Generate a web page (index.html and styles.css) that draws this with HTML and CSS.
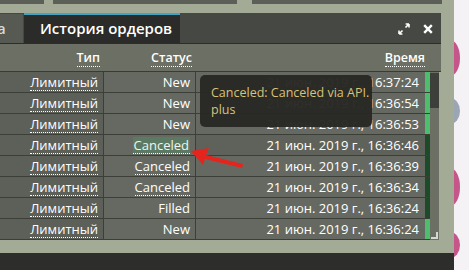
FILE: index.html
```html
<!DOCTYPE html>
<html lang="ru">
<head>
    <meta charset="UTF-8">
    <title>История ордеров</title>
    <link rel="stylesheet" href="styles.css">
</head>
<body>
    <div class="screen">
        <div class="workspace">
            <div class="top-strip">
                <div class="strip-seg seg-a"></div>
                <div class="strip-seg seg-b"></div>
                <div class="strip-seg seg-c"></div>
            </div>

            <div class="panel">
                <div class="panel-header">
                    <div class="tab">а</div>
                    <div class="tab active">История ордеров</div>
                    <div class="header-tools">
                        <svg class="tool-icon" width="12" height="12" viewBox="0 0 12 12">
                            <path d="M1 11 L4.5 7.5 M1 11 L1 7.6 M1 11 L4.4 11" stroke="#fff" stroke-width="1.6" fill="none"/>
                            <path d="M11 1 L7.5 4.5 M11 1 L7.6 1 M11 1 L11 4.4" stroke="#fff" stroke-width="1.6" fill="none"/>
                        </svg>
                        <svg class="tool-icon" width="10" height="10" viewBox="0 0 10 10">
                            <path d="M1.2 1.2 L8.8 8.8 M8.8 1.2 L1.2 8.8" stroke="#fff" stroke-width="2.4" fill="none"/>
                        </svg>
                    </div>
                </div>

                <div class="col-head">
                    <div class="th"><span class="dotted">Тип</span></div>
                    <div class="th"><span class="dotted">Статус</span></div>
                    <div class="th"><span class="dotted">Время</span></div>
                    <div class="th"></div>
                </div>

                <div class="panel-body">
                    <div class="rows">
                        <div class="row">
                            <div class="cell type"><span class="dotted">Лимитный</span></div>
                            <div class="cell">New</div>
                            <div class="cell">21 июн. 2019 г., 16:37:24</div>
                            <div class="mark on"></div>
                        </div>
                        <div class="row">
                            <div class="cell type"><span class="dotted">Лимитный</span></div>
                            <div class="cell">New</div>
                            <div class="cell">21 июн. 2019 г., 16:36:54</div>
                            <div class="mark on"></div>
                        </div>
                        <div class="row">
                            <div class="cell type"><span class="dotted">Лимитный</span></div>
                            <div class="cell">New</div>
                            <div class="cell">21 июн. 2019 г., 16:36:53</div>
                            <div class="mark on"></div>
                        </div>
                        <div class="row hover">
                            <div class="cell type"><span class="dotted">Лимитный</span></div>
                            <div class="cell"><span class="dotted status-hover">Canceled</span></div>
                            <div class="cell">21 июн. 2019 г., 16:36:46</div>
                            <div class="mark"></div>
                        </div>
                        <div class="row">
                            <div class="cell type"><span class="dotted">Лимитный</span></div>
                            <div class="cell"><span class="dotted">Canceled</span></div>
                            <div class="cell">21 июн. 2019 г., 16:36:39</div>
                            <div class="mark"></div>
                        </div>
                        <div class="row">
                            <div class="cell type"><span class="dotted">Лимитный</span></div>
                            <div class="cell"><span class="dotted">Canceled</span></div>
                            <div class="cell">21 июн. 2019 г., 16:36:34</div>
                            <div class="mark"></div>
                        </div>
                        <div class="row">
                            <div class="cell type"><span class="dotted">Лимитный</span></div>
                            <div class="cell">Filled</div>
                            <div class="cell">21 июн. 2019 г., 16:36:24</div>
                            <div class="mark"></div>
                        </div>
                        <div class="row">
                            <div class="cell type"><span class="dotted">Лимитный</span></div>
                            <div class="cell">New</div>
                            <div class="cell">21 июн. 2019 г., 16:36:24</div>
                            <div class="mark on"></div>
                        </div>
                    </div>
                    <div class="scrollbar">
                        <div class="thumb"></div>
                        <div class="resize-corner"></div>
                    </div>
                </div>
            </div>

            <div class="bottom-bar"></div>
        </div>

        <div class="side">
            <div class="blob blob-1"></div>
            <div class="blob blob-2"></div>
            <div class="blob blob-3"></div>
            <div class="blob blob-4"></div>
        </div>

        <div class="tooltip">Canceled: Canceled via API.<br>plus</div>

        <svg class="arrow" width="60" height="24" viewBox="0 0 60 24">
            <polygon points="2,4 20,1 17,8 54,17 53,21 16,12 14,18" fill="#e5241d"/>
        </svg>
    </div>
</body>
</html>
```

FILE: styles.css
```css
* {
    margin: 0;
    padding: 0;
    box-sizing: border-box;
}

body {
    font-family: 'Open Sans', 'DejaVu Sans', sans-serif;
    background: #a3ab96;
    width: 469px;
    height: 270px;
    overflow: hidden;
}

.screen {
    position: relative;
    display: flex;
    height: 270px;
}

.workspace {
    width: 454px;
    display: flex;
    flex-direction: column;
}

.top-strip {
    display: flex;
    height: 4px;
    margin-bottom: 9px;
    width: 442px;
}

.strip-seg {
    background: #5c5f58;
    height: 4px;
}

.seg-a {
    width: 44px;
    margin-right: 9px;
}

.seg-b {
    width: 184px;
    margin-right: 15px;
}

.seg-c {
    flex: 1;
}

.panel {
    width: 441px;
    display: flex;
    flex-direction: column;
}

.panel-header {
    display: flex;
    height: 31px;
    background: #464843;
    border-bottom: 1px solid #2c2d29;
}

.tab {
    width: 23px;
    margin-top: 1px;
    margin-right: 1px;
    background: #575a53;
    color: #d8d8d4;
    font-size: 15px;
    font-weight: 600;
    line-height: 29px;
    text-indent: -3px;
    overflow: hidden;
}

.tab.active {
    width: 156px;
    margin-top: 0;
    background: #2b2b29;
    border-top: 2px solid #43a3c3;
    color: #fff;
    text-indent: 0;
    padding-left: 16px;
    line-height: 27px;
}

.header-tools {
    flex: 1;
    display: flex;
    justify-content: flex-end;
    align-items: center;
    gap: 13px;
    padding-right: 8px;
    padding-top: 1px;
}

.col-head {
    display: grid;
    grid-template-columns: 104px 92px 229px 5px;
    height: 28px;
    background: #6b6f64;
    border-bottom: 1px solid #393b35;
}

.th {
    text-align: right;
    color: #fff;
    font-size: 12.5px;
    font-weight: 600;
    line-height: 28px;
    padding-right: 4px;
}

.th:nth-child(3) {
    padding-right: 0;
}

.dotted {
    border-bottom: 1px dotted #fff;
    padding-bottom: 0;
}

.th .dotted {
    line-height: 16px;
    display: inline-block;
}

.panel-body {
    display: flex;
}

.rows {
    width: 430px;
}

.row {
    display: grid;
    grid-template-columns: 104px 92px 229px 5px;
    height: 21px;
    border-bottom: 1px solid #3c3e38;
}

.cell {
    background: #666961;
    color: #fff;
    font-size: 13px;
    line-height: 20px;
    text-align: right;
    padding-right: 5px;
    border-right: 1px solid #3c3e38;
    white-space: nowrap;
}

.cell .dotted {
    display: inline-block;
    line-height: 16px;
}

.cell.type {
    background: #5d6058;
}

.row .cell:nth-child(3) {
    border-right: none;
    padding-right: 6px;
}

.row.hover .cell:nth-child(3) {
    background: #5f625a;
}

.status-hover {
    background: #5c7a63;
    color: #f0f5ee;
    padding: 0 1px;
}

.mark {
    background: #1d4a29;
}

.mark.on {
    background: #4fbd6e;
}

.scrollbar {
    position: relative;
    width: 9px;
    height: 168px;
    background: #6b6f64;
}

.thumb {
    height: 35px;
    background: #3d3f3a;
    margin-top: 1px;
}

.resize-corner {
    position: absolute;
    right: 1px;
    bottom: 1px;
    width: 7px;
    height: 7px;
    border-right: 2px solid #d5d7d0;
    border-bottom: 2px solid #d5d7d0;
}

.bottom-bar {
    margin-top: auto;
    height: 17px;
    background: #2d2d2b;
}

.side {
    position: relative;
    flex: 1;
    background: #f4f2f4;
    overflow: hidden;
}

.blob {
    position: absolute;
    left: -14px;
    width: 20px;
    border-radius: 50%;
    background: #c5568a;
}

.blob-1 {
    top: 40px;
    height: 36px;
}

.blob-2 {
    top: 98px;
    height: 26px;
    background: #9aa6b4;
}

.blob-3 {
    top: 168px;
    height: 38px;
}

.blob-4 {
    top: 232px;
    height: 26px;
}

.tooltip {
    position: absolute;
    left: 200px;
    top: 75px;
    width: 172px;
    height: 52px;
    background: rgba(40, 40, 36, 0.97);
    border-radius: 5px;
    color: #d8c27a;
    font-size: 12.5px;
    line-height: 17px;
    padding: 9px 11px;
    white-space: nowrap;
}

.arrow {
    position: absolute;
    left: 189px;
    top: 147px;
}
```
